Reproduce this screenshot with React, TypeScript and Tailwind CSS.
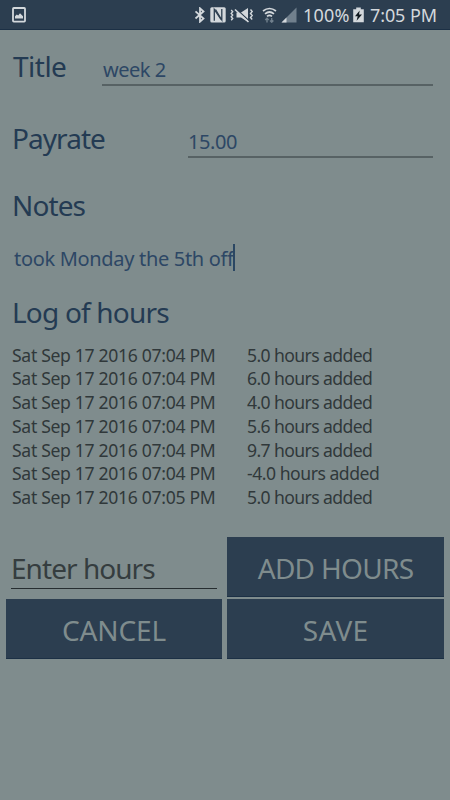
import React from "react"

const logEntries = [
  { date: "Sat Sep 17 2016 07:04 PM", hours: "5.0 hours added" },
  { date: "Sat Sep 17 2016 07:04 PM", hours: "6.0 hours added" },
  { date: "Sat Sep 17 2016 07:04 PM", hours: "4.0 hours added" },
  { date: "Sat Sep 17 2016 07:04 PM", hours: "5.6 hours added" },
  { date: "Sat Sep 17 2016 07:04 PM", hours: "9.7 hours added" },
  { date: "Sat Sep 17 2016 07:04 PM", hours: "-4.0 hours added" },
  { date: "Sat Sep 17 2016 07:05 PM", hours: "5.0 hours added" },
]

function StatusBar() {
  return (
    <header className="flex h-[30px] items-center border-b border-[#1c3045] bg-[#2c3e50] pl-3 text-[#d3d8dc]">
      <svg width="14" height="16" viewBox="0 0 14 16" className="mt-px">
        <rect x="1" y="1" width="12" height="13.6" rx="0.8" fill="none" stroke="currentColor" strokeWidth="1.8" />
        <path d="M3 11.5V9.3L4.8 7.5l1.4 1L8 6.3l3 3v2.2z" fill="currentColor" />
      </svg>

      {/* Bluetooth */}
      <svg width="12" height="16" viewBox="0 0 12 16" className="ml-[168px] mt-px">
        <path d="M1.5 4.3l8 7.2L6 14.7V1.3l3.5 3.2-8 7" fill="none" stroke="currentColor" strokeWidth="1.8" />
      </svg>

      {/* NFC */}
      <svg width="16" height="16" viewBox="0 0 16 16" className="ml-[4px] mt-px">
        <rect x="0.3" y="0.2" width="15.4" height="15.4" rx="1.5" fill="currentColor" />
        <path d="M4.3 13.8V2.5L11 12.5" fill="none" stroke="#2c3e50" strokeWidth="1.3" />
        <path d="M5.5 2.5l6.3 10.5V2" fill="none" stroke="#2c3e50" strokeWidth="1.3" />
      </svg>

      {/* Muted, vibrating */}
      <svg width="24" height="16" viewBox="0 0 24 16" className="ml-[4px]">
        <path d="M6.5 5.5H11L18 1v14l-7-4.5H6.5z" fill="currentColor" />
        <path d="M6.3 2l13 12" stroke="#2c3e50" strokeWidth="1.2" />
        <path d="M5 2.5l13.5 12.5" stroke="currentColor" strokeWidth="1.6" />
        <path d="M1.2 3l1.5 1.7-1.5 1.7 1.5 1.7-1.5 1.7 1.5 1.7-1.5 1.7M20.5 2.5l1.7 2-1.7 2 1.7 2-1.7 2 1.7 2" fill="none" stroke="currentColor" strokeWidth="1.4" />
      </svg>

      {/* Wi-Fi with traffic arrows */}
      <svg width="15" height="16" viewBox="0 0 15 16" className="ml-[8px]">
        <path d="M1 4Q7.5-1 14 4M3 6.8Q7.5 3.2 12 6.8M5 9.3Q7.5 7.3 10 9.3" fill="none" stroke="currentColor" strokeWidth="1.7" />
        <path d="M5 15.5v-4M3.3 13L5 11.3 6.7 13M9.7 11v4M8 13.5l1.7 1.7 1.7-1.7" fill="none" stroke="#71808d" strokeWidth="1.4" />
      </svg>

      <svg width="16" height="16" viewBox="0 0 16 16" className="ml-[4px]">
        <path d="M0.5 15.5L15.5 0.5v15z" fill="#71808d" />
        <path d="M0.5 15.5L5.5 10.5v5z" fill="currentColor" />
      </svg>

      <span className="ml-[6px] w-[50px] whitespace-nowrap pt-px text-[18px] tracking-[0.2px]">100%</span>

      <svg width="11" height="16" viewBox="0 0 11 16">
        <path d="M3.2 0.5h4.6v1.8H10.8v13H0.2v-13h3z" fill="currentColor" />
        <path d="M6.7 3.5L2 9.2h2.7l-1.1 4.6L9 7.4H6z" fill="#10191f" />
      </svg>

      <span className="ml-[6px] whitespace-nowrap pt-px text-[18px] tracking-[-0.1px]">7:05 PM</span>
    </header>
  )
}

export default function App() {
  return (
    <div className="h-[800px] w-[450px] overflow-hidden bg-[#7f8c8d] font-['Noto_Sans',sans-serif] text-[#243b53]">
      <StatusBar />

      <main>
        {/* Title */}
        <div className="flex h-[72px] pl-[13px] pt-[8px]">
          <label className="w-[89px] text-[28px] leading-[56px] tracking-[-0.5px]">Title</label>
          <div className="h-[48px] w-[331px] border-b-2 border-[#576264] pl-px text-[20px] leading-[63px] tracking-[-0.5px] text-[#2d4765]">
            week 2
          </div>
        </div>

        {/* Payrate */}
        <div className="flex h-[72px] pl-[13px] pt-[8px]">
          <label className="-ml-px w-[176px] text-[28px] leading-[56px] tracking-[-0.95px]">Payrate</label>
          <div className="h-[48px] w-[245px] border-b-2 border-[#576264] text-[20px] leading-[63px] tracking-[-0.4px] text-[#2d4765]">
            15.00
          </div>
        </div>

        {/* Notes */}
        <div className="h-[118px] pl-[13px] pt-[7px]">
          <label className="-ml-px block text-[28px] leading-[48px] tracking-[-0.9px]">Notes</label>
          <div className="mt-[15px] flex h-[27px] items-center pl-px">
            <span className="whitespace-nowrap pt-px text-[20px] leading-[27px] tracking-[-0.32px] text-[#2d4765]">took Monday the 5th off</span>
            <span className="-ml-px h-[27px] w-[2px] bg-[#2b4763]" />
          </div>
        </div>

        {/* Log */}
        <div className="h-[240px] pl-[13px]">
          <h2 className="-ml-px text-[28px] leading-[40px] tracking-[-0.8px]">Log of hours</h2>
          <ul className="mt-[11.5px] text-[17.6px] leading-[23.75px] text-[#30383a]">
            {logEntries.map((entry, i) => (
              <li key={i} className="-ml-px flex whitespace-nowrap">
                <span className="w-[235px] tracking-[-0.32px]">{entry.date}</span>
                <span className={entry.hours.startsWith("-") ? "tracking-[-0.48px]" : "tracking-[-0.6px]"}>{entry.hours}</span>
              </li>
            ))}
          </ul>
        </div>

        <div className="mt-[5px] grid grid-cols-[216px_217px] grid-rows-[60px_60px] gap-x-[5px] gap-y-[2px] pl-[6px] text-[28px] text-[#7f8c8d]">
          <div className="ml-[5px] h-[52px] w-[206px] border-b border-[#262d30] leading-[62px] tracking-[-0.95px] text-[#353d3f]">
            Enter hours
          </div>
          <button className="border-b border-[#1c3045] bg-[#2c3e50] pt-[2px] tracking-[-0.7px]">ADD HOURS</button>
          <button className="border-b border-[#1c3045] bg-[#2c3e50] pt-[2px] tracking-[-0.1px]">CANCEL</button>
          <button className="border-b border-[#1c3045] bg-[#2c3e50] pt-[2px] tracking-[0.2px]">SAVE</button>
        </div>
      </main>
    </div>
  )
}
